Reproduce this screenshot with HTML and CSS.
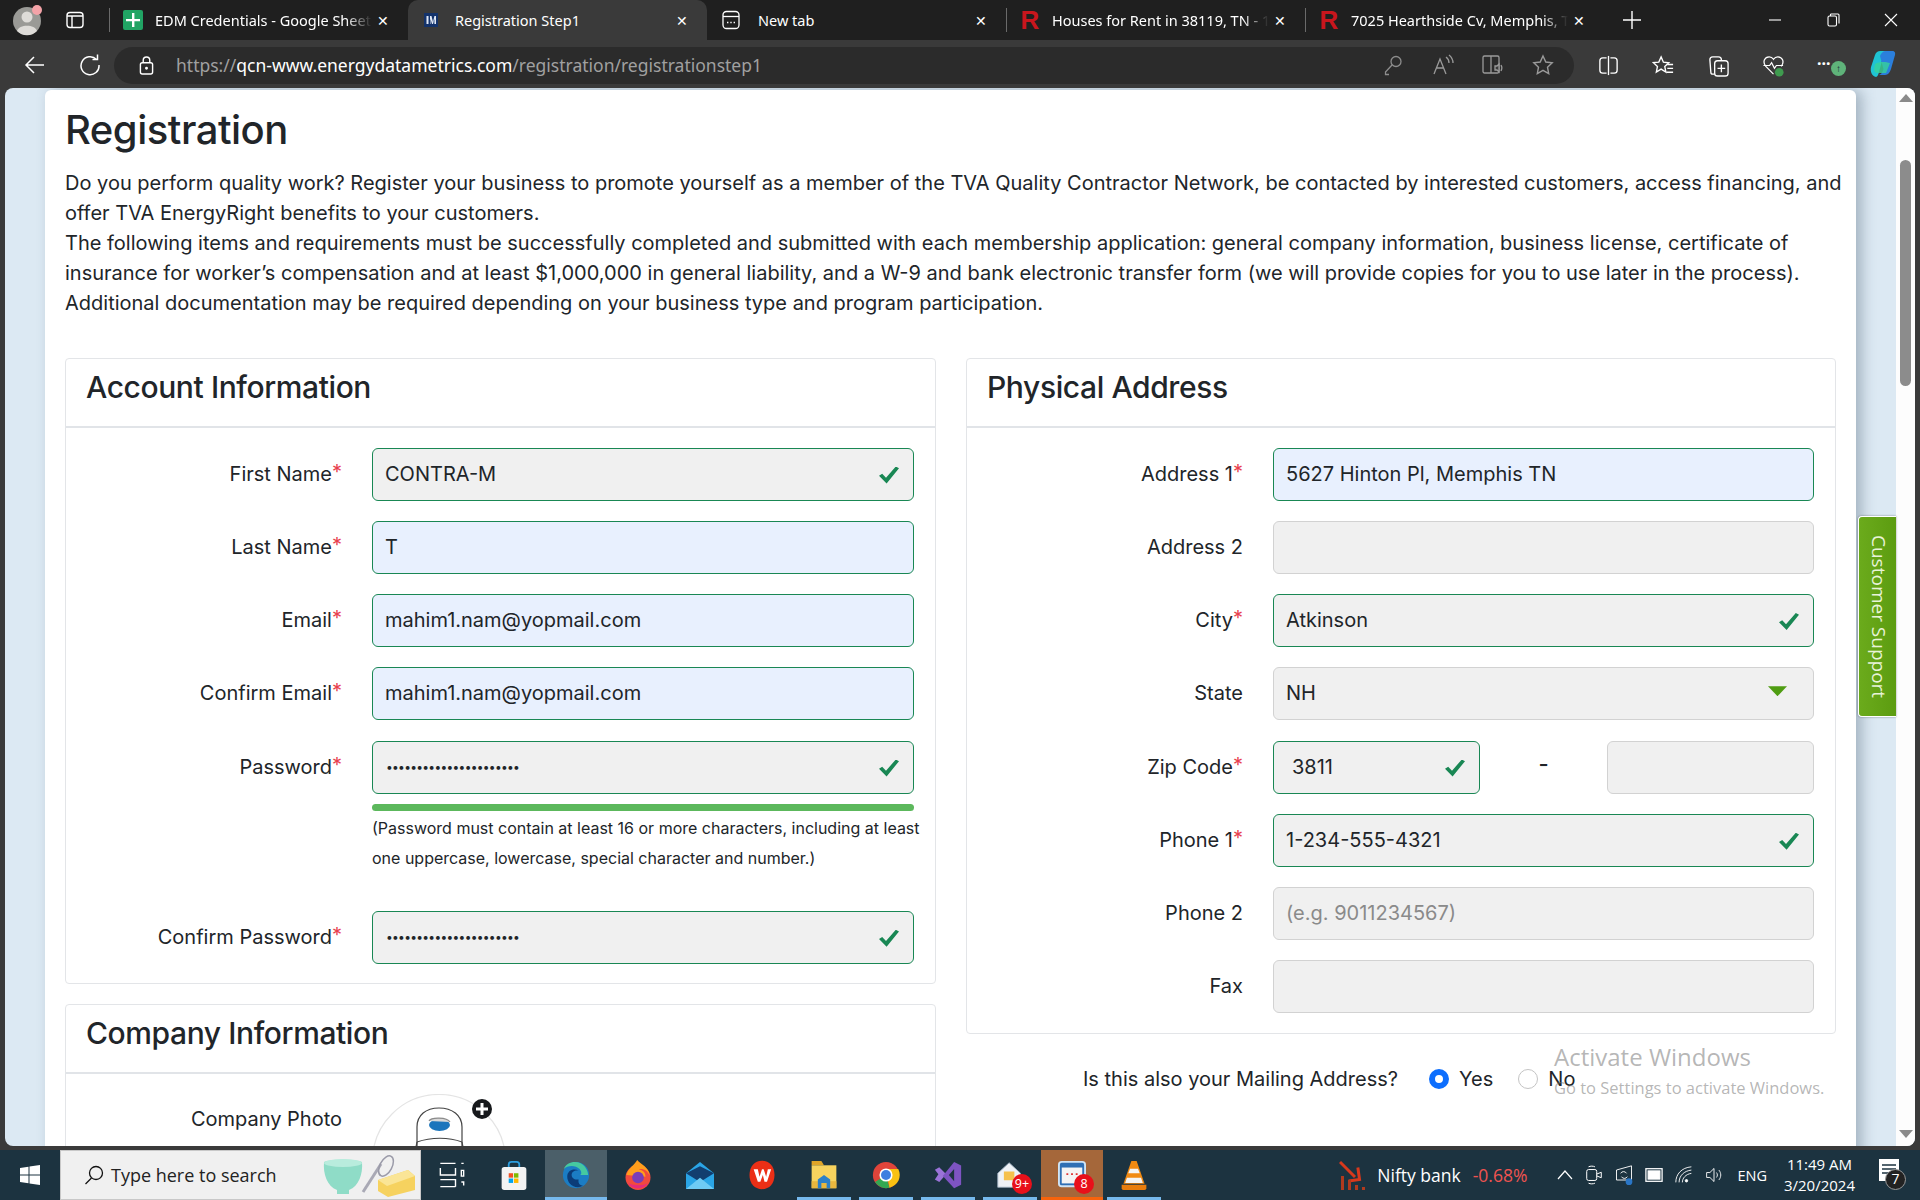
FILE: index.html
```html
<!DOCTYPE html>
<html lang="en">
<head>
<meta charset="utf-8">
<title>Registration Step1</title>
<link rel="stylesheet" href="styles.css">
</head>
<body>
<div class="window">
  <header class="tabstrip">
    <div class="strip-left">
      <svg class="avatar" viewBox="0 0 32 32"><circle cx="15" cy="17" r="14" fill="#9a9a96"/><circle cx="15" cy="13" r="5.5" fill="#dedcd8"/><path d="M5 27c2-7 18-7 20 0a14 14 0 0 1-20 0z" fill="#dedcd8"/><circle cx="25" cy="6" r="5" fill="#f4a3a8"/></svg>
      <svg class="ic18" viewBox="0 0 18 18" fill="none" stroke="#fff" stroke-width="1.4"><rect x="1" y="1.5" width="16" height="15" rx="3"/><path d="M1 5h16M6 5v11" /></svg>
    </div>
    <div class="tab sep">
      <svg class="fav" viewBox="0 0 20 20"><rect width="20" height="20" rx="2" fill="#21a464"/><path d="M9 3h2.4v6H17v2.2h-5.6V17H9v-5.8H3V9h6z" fill="#fff"/></svg>
      <span class="tab-title fade">EDM Credentials - Google Sheets</span>
      <span class="tab-x">✕</span>
    </div>
    <div class="tab active">
      <svg class="fav small" viewBox="0 0 14 14"><rect width="14" height="14" fill="#14336b"/><path d="M2.5 3h2v8h-2zM6 3h1.5L9 9l1.4-6H12v8h-1.6V6L9 11H8L6.5 6v5H6z" fill="#dfe7f5"/></svg>
      <span class="tab-title wide">Registration Step1</span>
      <span class="tab-x">✕</span>
    </div>
    <div class="tab sep">
      <svg class="fav" viewBox="0 0 18 20" fill="none" stroke="#fff" stroke-width="1.3"><rect x="1" y="1.5" width="16" height="17" rx="3.5"/><path d="M1 6.5h16"/><path d="M5 12.5h1.4M8.3 12.5h1.4M11.6 12.5H13" stroke-width="1.6"/></svg>
      <span class="tab-title wide">New tab</span>
      <span class="tab-x">✕</span>
    </div>
    <div class="tab sep">
      <span class="r-logo">R</span>
      <span class="tab-title fade">Houses for Rent in 38119, TN - 1 1 </span>
      <span class="tab-x">✕</span>
    </div>
    <div class="tab sep">
      <span class="r-logo">R</span>
      <span class="tab-title fade">7025 Hearthside Cv, Memphis, TN 38119</span>
      <span class="tab-x">✕</span>
    </div>
    <svg class="plus" viewBox="0 0 20 20" stroke="#fff" stroke-width="1.4"><path d="M10 1v18M1 10h18"/></svg>
    <div class="win-controls">
      <svg viewBox="0 0 14 14" stroke="#fff" stroke-width="1.1" fill="none"><path d="M1 7h12"/></svg>
      <svg viewBox="0 0 14 14" stroke="#fff" stroke-width="1.1" fill="none"><rect x="2" y="3" width="8.5" height="10" rx="1.5"/><path d="M4.5 3V1.5a.7.7 0 0 1 .7-.5H12a1 1 0 0 1 1 1v8.500"/></svg>
      <svg viewBox="0 0 14 14" stroke="#fff" stroke-width="1.1" fill="none"><path d="M1 1l12 12M13 1L1 13"/></svg>
    </div>
  </header>

  <nav class="toolbar">
    <svg class="nav-ic" viewBox="0 0 22 22" fill="none" stroke="#fff" stroke-width="1.5"><path d="M20 11H2M10 3l-8 8 8 8"/></svg>
    <svg class="nav-ic" viewBox="0 0 22 22" fill="none" stroke="#fff" stroke-width="1.5"><path d="M17.500 5.500A9 9 0 1 0 20 11"/><path d="M13.500 5.500h5v-5"/></svg>
    <div class="omnibox">
      <svg class="lock" viewBox="0 0 16 20" fill="none" stroke="#fff" stroke-width="1.500"><rect x="1.500" y="7" width="13" height="12" rx="2"/><path d="M4.500 7V4.500a3.500 3.500 0 0 1 7 0V7"/><circle cx="8" cy="13" r=".8" fill="#fff"/></svg>
      <span class="url"><span class="url-dim">https://</span>qcn-www.energydatametrics.com<span class="url-dim">/registration/registrationstep1</span></span>
      <div class="omni-icons">
        <svg viewBox="0 0 22 22" fill="none" stroke="#8d8d8d" stroke-width="1.300"><circle cx="14" cy="7.500" r="5"/><path d="M10 11L3.500 18v2.500H7"/></svg>
        <svg viewBox="0 0 22 22" fill="none" stroke="#9a9a9a" stroke-width="1.300"><path d="M2 20l6-15 6 15M4.500 14h7"/><path d="M14 3c2 1.500 3 3.500 3 6M17 1c2.500 2 4 5 4 8"/></svg>
        <svg viewBox="0 0 22 22" fill="none" stroke="#9a9a9a" stroke-width="1.300"><rect x="1" y="2" width="16" height="17" rx="1.500"/><path d="M9 2v17"/><path d="M13 12h2l2-2v8l-2-2h-2zM19 11c1 1.500 1 4 0 6" fill="#3a3a3a"/></svg>
        <svg viewBox="0 0 22 22" fill="none" stroke="#9a9a9a" stroke-width="1.400"><path d="M11 2l2.800 6 6.400.8-4.700 4.400 1.200 6.400-5.700-3.200-5.700 3.200 1.200-6.400L1.800 8.800 8.200 8z"/></svg>
      </div>
    </div>
    <div class="tool-icons">
      <svg viewBox="0 0 24 24" fill="none" stroke="#fff" stroke-width="1.400"><rect x="3" y="4" width="18" height="16" rx="3"/><path d="M12 1v22" stroke="#3a3a3a" stroke-width="4"/><path d="M12 2v20"/></svg>
      <svg viewBox="0 0 24 24" fill="none" stroke="#fff" stroke-width="1.400"><path d="M9.500 3l2.400 5.500 5.600.6-4.200 3.900 1.200 5.800-5-3-5 3 1.200-5.800L1.500 9l5.600-.6z"/><path d="M16 11h6M16 15h6M15 19h7"/></svg>
      <svg viewBox="0 0 24 24" fill="none" stroke="#fff" stroke-width="1.400"><rect x="8" y="7" width="14" height="16" rx="3"/><path d="M15 11v8M11 15h8"/><path d="M8 21H6a2 2 0 0 1-2-2L3 6a3 3 0 0 1 3-3h6a3 3 0 0 1 3 3v1"/></svg>
      <svg viewBox="0 0 24 24" fill="none" stroke="#fff" stroke-width="1.300"><path d="M12 21L4 13C0 8 3 3 7.500 3c2 0 3.500 1 4.500 2.500C13 4 14.500 3 16.500 3 21 3 24 8 20 13"/><path d="M1.500 12H8l2-3 3 6 2-3h7"/><circle cx="18" cy="19" r="4.500" fill="#3f9b4f" stroke="none"/></svg>
      <span class="more"><span class="more-dots">···</span><span class="more-badge">↑</span></span>
      <svg class="copilot" viewBox="0 0 30 30"><path d="M6 27C2 26 0 22 1 17L5 5c.8-2.500 3-4 5-4h8c-3 1-4 3-5 6L9 22c-.7 3-1.500 4.500-3 5z" fill="#1fc4d4"/><path d="M10 6c1-3 3-5 6-5h6c3 0 3.500 2 3 4l-4 14c-1 3-3 6-6 6H9c3-1 3.500-3 4.500-6z" fill="#2b7fdc"/><path d="M5 14c-1 5-2 9 3 9h8l4-10c-4-1-10-2-15 1z" fill="#37d39a" opacity=".8"/></svg>
    </div>
  </nav>

  <div class="frame">
    <div class="page">
      <main class="backdrop">
        <div class="sheet">
          <h1 class="page-title">Registration</h1>
          <p class="intro">Do you perform quality work? Register your business to promote yourself as a member of the TVA Quality Contractor Network, be contacted by interested customers, access financing, and<br>offer TVA EnergyRight benefits to your customers.<br>The following items and requirements must be successfully completed and submitted with each membership application: general company information, business license, certificate of<br>insurance for worker’s compensation and at least $1,000,000 in general liability, and a W-9 and bank electronic transfer form (we will provide copies for you to use later in the process).<br>Additional documentation may be required depending on your business type and program participation.</p>

          <div class="columns">
            <div class="col">
              <section class="card">
                <h2 class="card-title">Account Information</h2>
                <div class="card-body">
                  <div class="row"><label class="lbl">First Name<span class="req">*</span></label><div class="input ok checked">CONTRA-M</div></div>
                  <div class="row"><label class="lbl">Last Name<span class="req">*</span></label><div class="input ok auto">T</div></div>
                  <div class="row"><label class="lbl">Email<span class="req">*</span></label><div class="input ok auto">mahim1.nam@yopmail.com</div></div>
                  <div class="row"><label class="lbl">Confirm Email<span class="req">*</span></label><div class="input ok auto">mahim1.nam@yopmail.com</div></div>
                  <div class="row"><label class="lbl">Password<span class="req">*</span></label>
                    <div class="field-stack">
                      <div class="input ok checked dots">••••••••••••••••••••••</div>
                      <div class="meter"></div>
                      <p class="help">(Password must contain at least 16 or more characters, including at least<br>one uppercase, lowercase, special character and number.)</p>
                    </div>
                  </div>
                  <div class="row"><label class="lbl">Confirm Password<span class="req">*</span></label><div class="input ok checked dots">••••••••••••••••••••••</div></div>
                </div>
              </section>
              <section class="card">
                <h2 class="card-title">Company Information</h2>
                <div class="card-body">
                  <div class="row"><label class="lbl photo-lbl">Company Photo</label>
                    <div class="photo">
                      <svg class="photo-art" viewBox="0 0 136 90" fill="none" stroke="#444" stroke-width="1.200"><circle cx="67" cy="67" r="66.500" stroke="#e4e4e4"/><path d="M45 60V33c0-12 9-19 22-19s23 7 23 19v27"/><path d="M45 48c14-5 32-5 45 0"/><path d="M43 58l2-10M92 58l-2-10M43 58v14M92 58v14"/><path d="M50 66c10-4 25-4 35 0v20"/><ellipse cx="67.500" cy="31" rx="10.500" ry="6" fill="#1c75bc" stroke="none"/><path d="M57 27c2-4 18-4 21 1" stroke="#8a8a8a" fill="#d9d9d9"/></svg>
                      <svg class="photo-plus" viewBox="0 0 20 20"><circle cx="10" cy="10" r="10" fill="#17191c"/><path d="M8.500 4h3v4.500H16v3h-4.500V16h-3v-4.500H4v-3h4.500z" fill="#fff"/></svg>
                    </div>
                  </div>
                </div>
              </section>
            </div>

            <div class="col">
              <section class="card">
                <h2 class="card-title">Physical Address</h2>
                <div class="card-body">
                  <div class="row"><label class="lbl">Address 1<span class="req">*</span></label><div class="input ok auto">5627 Hinton Pl, Memphis TN</div></div>
                  <div class="row"><label class="lbl">Address 2</label><div class="input"></div></div>
                  <div class="row"><label class="lbl">City<span class="req">*</span></label><div class="input ok checked">Atkinson</div></div>
                  <div class="row"><label class="lbl">State</label><div class="input select">NH</div></div>
                  <div class="row"><label class="lbl">Zip Code<span class="req">*</span></label>
                    <div class="zip">
                      <div class="input ok checked zip-a">3811</div>
                      <span class="zip-dash">-</span>
                      <div class="input"></div>
                    </div>
                  </div>
                  <div class="row"><label class="lbl">Phone 1<span class="req">*</span></label><div class="input ok checked">1-234-555-4321</div></div>
                  <div class="row"><label class="lbl">Phone 2</label><div class="input hint">(e.g. 9011234567)</div></div>
                  <div class="row"><label class="lbl">Fax</label><div class="input"></div></div>
                </div>
              </section>
              <div class="mailing">
                <span class="mailing-q">Is this also your Mailing Address?</span>
                <span class="radio on"></span><span class="radio-lbl">Yes</span>
                <span class="radio"></span><span class="radio-lbl">No</span>
              </div>
            </div>
          </div>
        </div>
      </main>
      <aside class="scrollbar">
        <span class="arrow up"></span>
        <span class="thumb"></span>
        <span class="arrow down"></span>
      </aside>
      <div class="support">Customer Support</div>
      <div class="activate">
        <div class="activate-a">Activate Windows</div>
        <div class="activate-b">Go to Settings to activate Windows.</div>
      </div>
    </div>
  </div>

  <footer class="taskbar">
    <div class="start"><svg viewBox="0 0 20 20" fill="#fff"><path d="M0 3l8.500-1.200v7.700H0zM9.500 1.600L20 0v9.500H9.500zM0 10.500h8.500v7.700L0 17zM9.500 10.500H20V20L9.500 18.400z"/></svg></div>
    <div class="search">
      <svg class="mag" viewBox="0 0 20 20" fill="none" stroke="#111" stroke-width="1.300"><circle cx="12" cy="8" r="6.500"/><path d="M7.500 13L1.500 19"/></svg>
      <span class="search-text">Type here to search</span>
      <svg class="search-art" viewBox="0 0 96 44">
        <path d="M3 8c6-3 32-3 38 0 1 12-3 24-13 28v4H16v-4C6 32 2 20 3 8z" fill="#8fdcc7"/><ellipse cx="22" cy="9" rx="19" ry="4" fill="#b9ecdd"/>
        <path d="M42 38L60 10" stroke="#a9a9b5" stroke-width="3"/><ellipse cx="65" cy="12" rx="6" ry="11" transform="rotate(28 65 12)" fill="none" stroke="#9a9aa8" stroke-width="1.500"/>
        <path d="M57 26l30-10 7 6v14l-27 7-10-6z" fill="#f6d25f"/><path d="M57 26l9 6 28-10-7-6z" fill="#fae596"/>
      </svg>
    </div>
    <div class="apps">
      <div class="app"><svg viewBox="0 0 24 24" fill="none" stroke="#fff" stroke-width="1.200"><path d="M2 2h13M2 6v6h13V6M2 16h13v6M2 22h13"/><path d="M20 2h2M20 8h2v5h-2zM20 18h2v3"/></svg></div>
      <div class="app"><svg viewBox="0 0 30 34"><path d="M9 9V5a3 3 0 0 1 3-3h6a3 3 0 0 1 3 3v4" fill="none" stroke="#2c9fe0" stroke-width="2"/><rect x="1" y="8" width="28" height="26" rx="3" fill="#f3f3f3"/><rect x="9" y="15" width="5" height="5" fill="#f25022"/><rect x="15" y="15" width="5" height="5" fill="#7fba00"/><rect x="9" y="21" width="5" height="5" fill="#00a4ef"/><rect x="15" y="21" width="5" height="5" fill="#ffb900"/></svg></div>
      <div class="app edge run"><svg viewBox="0 0 32 32"><circle cx="16" cy="16" r="15" fill="#1b7dc4"/><path d="M30 20C31 9 24 1 15 1 9 1 4 4 2 9c4-4 13-5 18 0 2 2 3 5 1 7h9z" fill="#46c9a0"/><path d="M19 21c-5 1-8-2-8-5 0-4 4-6 8-5-6-3-13 0-13 7 0 6 5 12 12 12 2 0 4-1 6-2-3 0-6-2-5-7z" fill="#0b3c78"/></svg></div>
      <div class="app"><svg viewBox="0 0 32 36"><circle cx="16" cy="21" r="15" fill="#f24a3d"/><path d="M2 18C4 10 12 6 15 0c4 5 14 8 15 19-2-6-7-9-13-8 5 1 8 4 8 9" fill="#ff9e1c"/><path d="M4 28c4 7 18 9 24 0-5 3-17 3-24 0z" fill="#e62b7c"/><circle cx="16" cy="21" r="7" fill="#7a3db8"/></svg></div>
      <div class="app"><svg viewBox="0 0 32 32"><path d="M0 14L16 1l16 13v18H0z" fill="#2aa5e6"/><path d="M0 14l16 10 16-10-16-8z" fill="#123e6f"/><path d="M0 32l16-13 16 13z" fill="#6fcbf4"/></svg></div>
      <div class="app"><svg viewBox="0 0 32 36"><path d="M16 1c9 0 15 7 15 17s-6 17-15 17S1 28 1 18 7 1 16 1z" fill="#eb2f16"/><path d="M6 11h5l2 9 3-9h2l3 9 2-9h4l-5 15h-3l-2-8-3 8h-3z" fill="#fff"/></svg></div>
      <div class="app run"><svg viewBox="0 0 30 34"><path d="M1 1h11l3 5H1z" fill="#e0a528"/><rect x="1" y="6" width="28" height="26" fill="#f7d35e"/><rect x="1" y="24" width="28" height="8" fill="#e9b73e"/><path d="M8 32V22l7-5 7 5v10h-4v-6h-6v6z" fill="#2c80c9"/></svg></div>
      <div class="app run"><svg viewBox="0 0 32 32"><circle cx="16" cy="16" r="15" fill="#e0443a"/><path d="M16 16L3.500 24A15 15 0 0 0 20 30.500z" fill="#33a852"/><path d="M16 9h14a15 15 0 0 1-10 21.500z" fill="#f9c112"/><circle cx="16" cy="16" r="7.500" fill="#fff"/><circle cx="16" cy="16" r="5.700" fill="#3f7fe0"/></svg></div>
      <div class="app run"><svg viewBox="0 0 32 32"><path d="M1 10l5-3 8 8-8 9-5-3 4-6z" fill="#9a73d8"/><path d="M23 1l8 4v22l-8 4L10 17z" fill="#7e54c2"/><path d="M23 9l-6 7 6 7z" fill="#1d3340"/></svg></div>
      <div class="app run badge-host"><svg viewBox="0 0 32 32"><path d="M2 14L15 2l13 12v16H2z" fill="#eef2f6" stroke="#9ab" stroke-width="1"/><path d="M9 12h12v10H9z" fill="#f5c14c"/></svg><span class="badge">9+</span></div>
      <div class="app run-o badge-host active-app"><svg viewBox="0 0 30 32" fill="none"><rect x="1" y="2" width="28" height="26" rx="3" stroke="#cfe4f5" stroke-width="2" fill="#2f6fb4"/><rect x="4" y="8" width="22" height="17" fill="#f4f4f4"/><path d="M9 15h2M14 15h2M19 15h2" stroke="#d33" stroke-width="2"/></svg><span class="badge">8</span></div>
      <div class="app run"><svg viewBox="0 0 28 34"><path d="M11 1h6l9 26H2z" fill="#f18a12"/><path d="M9.500 10h9l2 5h-13zM6 20h16l2 6H4z" fill="#f4f4f4"/><path d="M0 28h28v4a2 2 0 0 1-2 2H2a2 2 0 0 1-2-2z" fill="#e87d0d"/></svg></div>
    </div>
    <div class="tray">
      <svg class="nifty" viewBox="0 0 28 30"><path d="M1 2l15 15" stroke="#d8391c" stroke-width="3" fill="none"/><path d="M20 8v12H9" stroke="#d8391c" stroke-width="3" fill="none" transform="rotate(-8 16 16)"/><path d="M2 16h3v14H2zM9 20h3v10H9zM16 25h3v5h-3zM23 27h3v3h-3z" fill="#b03a1e"/></svg>
      <span class="nifty-name">Nifty bank</span>
      <span class="nifty-val">-0.68%</span>
      <div class="tray-icons">
        <svg class="t-chev" viewBox="0 0 16 10" fill="none" stroke="#fff" stroke-width="1.200"><path d="M1 9l7-8 7 8"/></svg>
        <svg viewBox="0 0 18 22" fill="none" stroke="#fff" stroke-width="1.100"><rect x="1" y="5" width="11" height="12" rx="2"/><path d="M12 10l5-2v6l-5-2M3 2c2-1 5-1 7 0M3 20c2 1 5 1 7 0"/></svg>
        <svg viewBox="0 0 20 24" fill="none" stroke="#fff" stroke-width="1.100"><path d="M1 6l18-5v17H1z"/><path d="M6 10a4 4 0 0 1 7 0M14 14a4 4 0 0 1-7 0"/><circle cx="16" cy="20" r="4" fill="#2a76c6" stroke="none"/></svg>
        <svg viewBox="0 0 20 18" fill="none" stroke="#fff" stroke-width="1.400"><rect x="1" y="2" width="18" height="14"/><rect x="3.500" y="4.500" width="13" height="9" fill="#fff"/></svg>
        <svg viewBox="0 0 22 22" fill="none" stroke="#fff" stroke-width="1.100"><path d="M1 20C1 10 8 2 20 1M5 20c0-8 6-14 15-15M9 20c0-5 4-10 11-11"/><circle cx="14" cy="18" r="1.500" fill="#fff"/></svg>
        <svg viewBox="0 0 22 22" fill="none" stroke="#fff" stroke-width="1.100"><path d="M2 8h4l5-5v16l-5-5H2zM14 8c1.500 2 1.500 4 0 6M17 5c3 3.500 3 8.500 0 12"/></svg>
      </div>
      <span class="lang">ENG</span>
      <div class="clock"><div>11:49 AM</div><div>3/20/2024</div></div>
      <div class="notify">
        <svg viewBox="0 0 20 22" fill="#fff"><path d="M0 0h20v22H0z"/><path d="M3 6h14M3 10h14M3 14h10" stroke="#1d3340" stroke-width="1.500"/></svg>
        <span class="notify-count">7</span>
      </div>
    </div>
  </footer>
</div>
</body>
</html>
```

FILE: styles.css
```css
* { box-sizing: border-box; }
html, body { margin: 0; height: 100%; }
body { background: #1f1f1f; overflow: hidden; }
.window { width: 1920px; height: 1200px; display: flex; flex-direction: column; }

/* tab strip */
.tabstrip { height: 40px; background: #1f1f1f; display: flex; align-items: stretch; color: #fff; font: 14.500px "Noto Sans", sans-serif; }
.strip-left { width: 109px; display: flex; align-items: center; padding-left: 12px; gap: 22px; }
.avatar { width: 32px; height: 32px; }
.ic18 { width: 18px; height: 18px; }
.tab { width: 299px; display: flex; align-items: center; padding: 0 14px 0 14px; position: relative; white-space: nowrap; }
.tab.sep::before { content: ""; position: absolute; left: 0; top: 8px; bottom: 8px; width: 1px; background: #6a6a6a; }
.tab.active { background: #3a3a3a; border-radius: 10px 10px 0 0; padding-left: 16px; }
.tab.active + .tab.sep::before { display: none; }
.fav { width: 20px; height: 20px; flex: none; }
.fav.small { width: 14px; height: 14px; }
.tab-title { margin-left: 12px; flex: 1; overflow: hidden; min-width: 0; }
.tab-title.wide { margin-left: 17px; }
.fade { -webkit-mask-image: linear-gradient(90deg, #000 88%, transparent 100%); mask-image: linear-gradient(90deg, #000 88%, transparent 100%); }
.tab-x { font-size: 14px; width: 22px; text-align: center; flex: none; }
.r-logo { width: 20px; flex: none; color: #c8161d; font: 700 26px "Liberation Sans", sans-serif; line-height: 30px; text-align: center; }
.plus { width: 20px; height: 20px; align-self: center; margin-left: 18px; }
.win-controls { margin-left: auto; display: flex; align-items: center; gap: 44px; padding-right: 22px; }
.win-controls svg { width: 14px; height: 14px; }

/* toolbar */
.toolbar { height: 48px; background: #3a3a3a; display: flex; align-items: center; padding: 2px 0 0 24px; }
.nav-ic { width: 22px; height: 22px; margin-right: 33px; flex: none; }
.omnibox { width: 1460px; height: 37px; margin-left: -20px; background: #2b2b2b; border-radius: 19px; display: flex; align-items: center; padding-left: 25px; }
.lock { width: 15px; height: 19px; flex: none; }
.url { margin-left: 22px; color: #fff; font: 17.500px "Noto Sans", sans-serif; white-space: nowrap; }
.url-dim { color: #a0a0a0; }
.omni-icons { margin-left: auto; display: flex; gap: 28px; padding-right: 20px; }
.omni-icons svg { width: 22px; height: 22px; }
.tool-icons { display: flex; align-items: center; margin-left: 23px; gap: 32px; }
.tool-icons svg { width: 23px; height: 23px; flex: none; }
.more { width: 24px; height: 24px; position: relative; color: #fff; font: 700 16px "Noto Sans", sans-serif; }
.more-dots { position: absolute; left: 0; top: -1px; letter-spacing: 0; }
.more-badge { position: absolute; left: 14px; top: 8px; width: 15px; height: 15px; border-radius: 50%; background: #5fb37a; color: #123; font: 700 10px/15px "Noto Sans", sans-serif; text-align: center; }
.tool-icons .copilot { width: 30px; height: 30px; margin-left: -3px; }

/* page frame */
.frame { height: 1062px; background: #3a3a3a; padding: 0 5px 4px 5px; }
.page { height: 1058px; background: #dce9f3; border-radius: 8px; display: flex; overflow: hidden; position: relative; }
.backdrop { flex: 1; min-width: 0; padding: 2px 40px 0 40px; overflow: hidden; }
.sheet { background: #fff; border-radius: 6px 6px 0 0; padding: 16px 20px 0; box-shadow: 6px 0 14px rgba(60, 80, 100, .35); height: 1400px; color: #212529; font-family: Inter, sans-serif; }
.page-title { margin: 0 0 14px; font-size: 40px; line-height: 48px; font-weight: 500; letter-spacing: -.5px; }
.intro { margin: 0 0 40px; font-size: 20px; line-height: 30px; white-space: nowrap; }
.columns { display: grid; grid-template-columns: 871px 870px; gap: 30px; align-items: start; }
.col { display: flex; flex-direction: column; gap: 20px; }
.card { border: 1.500px solid #e3e5e8; border-radius: 4px; }
.card-title { margin: 0; height: 68.500px; padding-left: 20px; font-size: 30px; line-height: 56px; font-weight: 500; letter-spacing: -.4px; border-bottom: 2px solid #e1e4e8; }
.card-body { padding: 20px 21px 19.500px 0; display: flex; flex-direction: column; gap: 20.250px; }
.row { display: grid; grid-template-columns: 276px 1fr; column-gap: 30px; align-items: start; }
.lbl { text-align: right; font-size: 20px; line-height: 52px; white-space: nowrap; }
.lbl:not(:has(.req)) { padding-right: 0; }
.req { color: #e8404f; position: relative; top: -2px; }
.input { height: 53px; background: #f0f0f0; border: 1.500px solid #d2d2d2; border-radius: 6px; padding: 0 12px; font-size: 20px; line-height: 51px; white-space: nowrap; position: relative; }
.input.ok { border-color: #198754; }
.input.auto { background: #e8f0fe; }
.input.hint { color: #8a8a8a; }
.input.dots { font-size: 12px; letter-spacing: -.700px; line-height: 50px; padding-left: 13px; }
.input.checked::after { content: ""; position: absolute; right: 14px; top: 18px; width: 20px; height: 17px; background: #198754; clip-path: polygon(0 55%, 16% 42%, 35% 66%, 84% 0, 100% 10%, 38% 100%); }
.input.select::after { content: ""; position: absolute; right: 26px; top: 18px; width: 19px; height: 10px; background: #4f9d12; clip-path: polygon(0 0, 100% 0, 50% 100%); }
.field-stack { min-width: 0; }
.meter { height: 7px; margin-top: 10px; background: #5cb85c; border-radius: 4px; }
.help { margin: 2px 0 0; font-size: 16px; line-height: 30px; white-space: nowrap; height: 60px; margin-bottom: 18px; }
.zip { display: grid; grid-template-columns: 207px 1fr 207px; align-items: start; }
.zip-a { padding-left: 18px; }
.zip-dash { text-align: center; font-size: 22px; line-height: 46px; font-weight: 500; }
.photo { position: relative; height: 134px; }
.photo-art { position: absolute; left: 0; top: 0; width: 136px; height: 90px; }
.photo-plus { position: absolute; left: 100px; top: 5px; width: 20px; height: 20px; }
.photo-lbl { line-height: 50px; }
.mailing { display: flex; align-items: center; height: 50px; padding-left: 117px; font-size: 20px; margin-top: 0; white-space: nowrap; }
.mailing-q { margin-right: 31px; }
.radio { width: 20px; height: 20px; border-radius: 50%; border: 1.500px solid #c4c4c4; background: #fff; flex: none; }
.radio.on { border: 6px solid #0d6efd; }
.radio-lbl { margin: 0 25px 0 10px; }

/* scrollbar + overlays */
.scrollbar { width: 19px; background: #fdfdfd; position: relative; display: flex; flex-direction: column; align-items: center; padding: 6px 0 8px; flex: none; }
.arrow { width: 0; height: 0; border-left: 7px solid transparent; border-right: 7px solid transparent; }
.arrow.up { border-bottom: 8px solid #8a8a8a; }
.arrow.down { border-top: 8px solid #8a8a8a; margin-top: auto; }
.thumb { width: 11px; height: 226px; background: #8c8c8c; border-radius: 6px; margin-top: 58px; }
.support { position: absolute; right: 19px; top: 428px; width: 38px; height: 201px; background: linear-gradient(270deg, #5c9c10, #6bab1c); border: 1.500px solid #fff; border-right: 0; border-radius: 4px 0 0 4px; color: #e8f3d8; font: 19px/34px "Open Sans", sans-serif; writing-mode: vertical-rl; text-align: center; box-shadow: 0 0 2px rgba(0, 0, 0, .5); }
.activate { position: absolute; left: 1549px; top: 953px; color: rgba(120, 120, 120, .55); font-family: "Open Sans", sans-serif; pointer-events: none; white-space: nowrap; }
.activate-a { font-size: 24px; line-height: 32px; }
.activate-b { font-size: 16.500px; line-height: 26px; margin-top: 2px; }

/* taskbar */
.taskbar { height: 50px; background: #1c3340; display: flex; align-items: stretch; color: #fff; font-family: "Open Sans", sans-serif; flex: none; }
.start { width: 60px; display: flex; align-items: center; justify-content: center; }
.start svg { width: 20px; height: 20px; }
.search { width: 361px; background: #f0f0f0; border: 1px solid #c8c8c8; display: flex; align-items: center; padding-left: 15px; position: relative; }
.mag { width: 20px; height: 20px; margin-left: 8px; flex: none; }
.search-text { margin-left: 7px; color: #222; font-size: 18px; white-space: nowrap; }
.search-art { position: absolute; right: 3px; top: 3px; width: 96px; height: 44px; }
.apps { display: flex; }
.app { width: 62px; display: flex; align-items: center; justify-content: center; position: relative; }
.app svg { width: 28px; height: 30px; }
.app.edge { background: #4b5f69; }
.app.run::after, .app.run-o::after { content: ""; position: absolute; left: 4px; right: 4px; bottom: 0; height: 3px; background: #76b9ed; }
.app.edge::after { left: 0; right: 0; }
.app.active-app { background: #a5673a; }
.app.run-o::after { left: 0; right: 0; background: #f7630c; }
.badge { position: absolute; left: 33px; top: 24px; width: 20px; height: 20px; border-radius: 50%; background: #e8101a; font-size: 12.500px; line-height: 20px; text-align: center; color: #fff; }
.tray { margin-left: auto; display: flex; align-items: center; padding-right: 15px; white-space: nowrap; }
.nifty { width: 28px; height: 30px; }
.nifty-name { margin-left: 10px; font-size: 17.500px; }
.nifty-val { margin-left: 12px; color: #ef5350; font-size: 17.500px; }
.tray-icons { display: flex; align-items: center; gap: 12px; margin-left: 30px; }
.tray-icons svg { width: 18px; height: 20px; }
.tray-icons .t-chev { width: 16px; height: 10px; }
.lang { margin-left: 14px; font-size: 14.500px; }
.clock { margin-left: 17px; text-align: center; font-size: 15px; line-height: 21px; }
.notify { position: relative; margin-left: 24px; width: 26px; height: 32px; }
.notify svg { width: 20px; height: 22px; position: absolute; left: 0; top: 0; }
.notify-count { position: absolute; left: 6px; top: 10px; width: 21px; height: 21px; border-radius: 50%; background: #222; border: 1.500px solid #999; font-size: 14px; line-height: 18px; text-align: center; }
```
